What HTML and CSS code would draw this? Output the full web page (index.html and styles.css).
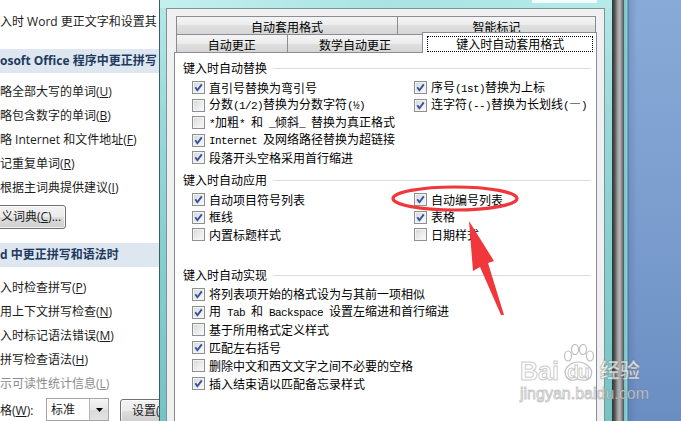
FILE: index.html
```html
<!DOCTYPE html>
<html lang="zh-CN">
<head>
<meta charset="utf-8">
<title>自动更正</title>
<link rel="stylesheet" href="styles.css">
</head>
<body>
<div class="screen">
  <section class="wo">
    <div class="wo-line intro">入时 Word 更正文字和设置其</div>
    <div class="wo-band band-one">osoft Office 程序中更正拼写</div>
    <div class="wo-list list-one">
      <div class="wo-line">略全部大写的单词(<u>U</u>)</div>
      <div class="wo-line">略包含数字的单词(<u>B</u>)</div>
      <div class="wo-line">略 Internet 和文件地址(<u>F</u>)</div>
      <div class="wo-line">记重复单词(<u>R</u>)</div>
      <div class="wo-line">根据主词典提供建议(<u>I</u>)</div>
    </div>
    <div class="wo-btn dict">义词典(<u>C</u>)...</div>
    <div class="wo-band band-two">d 中更正拼写和语法时</div>
    <div class="wo-list list-two">
      <div class="wo-line">入时检查拼写(<u>P</u>)</div>
      <div class="wo-line">用上下文拼写检查(<u>N</u>)</div>
      <div class="wo-line">入时标记语法错误(<u>M</u>)</div>
      <div class="wo-line">拼写检查语法(<u>H</u>)</div>
      <div class="wo-line dim">示可读性统计信息(<u>L</u>)</div>
    </div>
    <div class="style-row">
      <span class="style-label">格(<u>W</u>):</span>
      <span class="combo">
        <span class="combo-text">标准</span>
        <span class="combo-btn"><svg width="7" height="4" viewBox="0 0 7 4"><path d="M0 0H7L3.5 4Z" fill="#000"/></svg></span>
      </span>
      <span class="wo-btn setbtn">设置(</span>
    </div>
  </section>

  <section class="frame">
    <div class="frame-top"><span class="title-strip"></span></div>
    <div class="dialog">
      <div class="tab-row">
        <div class="tab t-a">自动套用格式</div>
        <div class="tab t-b">智能标记</div>
      </div>
      <div class="tab-row lower">
        <div class="tab t-c">自动更正</div>
        <div class="tab t-d">数学自动更正</div>
        <div class="tab active"><span class="focus">键入时自动套用格式</span></div>
      </div>
      <div class="panel">
        <div class="group g1">
          <div class="group-head"><span>键入时自动替换</span></div>
          <div class="cols">
            <div class="col">
              <div class="cb"><span class="box"><svg width="11" height="11" viewBox="0 0 11 11"><path d="M2.3 5.3L4.4 8.2L8.8 2.4" fill="none" stroke="#34509e" stroke-width="1.9"/></svg></span><span class="lbl">直引号替换为弯引号</span></div>
              <div class="cb"><span class="box"></span><span class="lbl">分数<span class="m">(1/2)</span>替换为分数字符<span class="m">(½)</span></span></div>
              <div class="cb"><span class="box"></span><span class="lbl"><span class="m">*</span>加粗<span class="m">* </span>和<span class="m"> _</span>倾斜<span class="m">_ </span>替换为真正格式</span></div>
              <div class="cb"><span class="box"><svg width="11" height="11" viewBox="0 0 11 11"><path d="M2.3 5.3L4.4 8.2L8.8 2.4" fill="none" stroke="#34509e" stroke-width="1.9"/></svg></span><span class="lbl"><span class="m">Internet </span>及网络路径替换为超链接</span></div>
              <div class="cb"><span class="box"><svg width="11" height="11" viewBox="0 0 11 11"><path d="M2.3 5.3L4.4 8.2L8.8 2.4" fill="none" stroke="#34509e" stroke-width="1.9"/></svg></span><span class="lbl">段落开头空格采用首行缩进</span></div>
            </div>
            <div class="col">
              <div class="cb"><span class="box"><svg width="11" height="11" viewBox="0 0 11 11"><path d="M2.3 5.3L4.4 8.2L8.8 2.4" fill="none" stroke="#34509e" stroke-width="1.9"/></svg></span><span class="lbl">序号<span class="m">(1st)</span>替换为上标</span></div>
              <div class="cb"><span class="box"><svg width="11" height="11" viewBox="0 0 11 11"><path d="M2.3 5.3L4.4 8.2L8.8 2.4" fill="none" stroke="#34509e" stroke-width="1.9"/></svg></span><span class="lbl">连字符<span class="m">(--)</span>替换为长划线<span class="m">(</span>—<span class="m">)</span></span></div>
            </div>
          </div>
        </div>

        <div class="group g2">
          <div class="group-head"><span>键入时自动应用</span></div>
          <div class="cols">
            <div class="col">
              <div class="cb"><span class="box"><svg width="11" height="11" viewBox="0 0 11 11"><path d="M2.3 5.3L4.4 8.2L8.8 2.4" fill="none" stroke="#34509e" stroke-width="1.9"/></svg></span><span class="lbl">自动项目符号列表</span></div>
              <div class="cb"><span class="box"><svg width="11" height="11" viewBox="0 0 11 11"><path d="M2.3 5.3L4.4 8.2L8.8 2.4" fill="none" stroke="#34509e" stroke-width="1.9"/></svg></span><span class="lbl">框线</span></div>
              <div class="cb"><span class="box"></span><span class="lbl">内置标题样式</span></div>
            </div>
            <div class="col">
              <div class="cb"><span class="box"><svg width="11" height="11" viewBox="0 0 11 11"><path d="M2.3 5.3L4.4 8.2L8.8 2.4" fill="none" stroke="#34509e" stroke-width="1.9"/></svg></span><span class="lbl">自动编号列表</span></div>
              <div class="cb"><span class="box"><svg width="11" height="11" viewBox="0 0 11 11"><path d="M2.3 5.3L4.4 8.2L8.8 2.4" fill="none" stroke="#34509e" stroke-width="1.9"/></svg></span><span class="lbl">表格</span></div>
              <div class="cb"><span class="box"></span><span class="lbl">日期样式</span></div>
            </div>
          </div>
        </div>

        <div class="group g3">
          <div class="group-head"><span>键入时自动实现</span></div>
          <div class="col">
            <div class="cb"><span class="box"><svg width="11" height="11" viewBox="0 0 11 11"><path d="M2.3 5.3L4.4 8.2L8.8 2.4" fill="none" stroke="#34509e" stroke-width="1.9"/></svg></span><span class="lbl">将列表项开始的格式设为与其前一项相似</span></div>
            <div class="cb"><span class="box"><svg width="11" height="11" viewBox="0 0 11 11"><path d="M2.3 5.3L4.4 8.2L8.8 2.4" fill="none" stroke="#34509e" stroke-width="1.9"/></svg></span><span class="lbl">用<span class="m"> Tab </span>和<span class="m"> Backspace </span>设置左缩进和首行缩进</span></div>
            <div class="cb"><span class="box"></span><span class="lbl">基于所用格式定义样式</span></div>
            <div class="cb"><span class="box"><svg width="11" height="11" viewBox="0 0 11 11"><path d="M2.3 5.3L4.4 8.2L8.8 2.4" fill="none" stroke="#34509e" stroke-width="1.9"/></svg></span><span class="lbl">匹配左右括号</span></div>
            <div class="cb"><span class="box"></span><span class="lbl">删除中文和西文文字之间不必要的空格</span></div>
            <div class="cb"><span class="box"><svg width="11" height="11" viewBox="0 0 11 11"><path d="M2.3 5.3L4.4 8.2L8.8 2.4" fill="none" stroke="#34509e" stroke-width="1.9"/></svg></span><span class="lbl">插入结束语以匹配备忘录样式</span></div>
          </div>
        </div>
      </div>
    </div>
  </section>

  <section class="desk"></section>
</div>

<svg class="marks" width="681" height="421" viewBox="0 0 681 421">
  <ellipse cx="455" cy="198.5" rx="62" ry="11.5" fill="none" stroke="#f0373c" stroke-width="3.2"/>
  <polygon points="469,221 494,261 488,263 504,315 501,315 480,267 473,271" fill="#f0373c"/>
</svg>

<div class="watermark">
  <div class="wm-logo">
    <span class="wm-bai">Bai</span>
    <span class="wm-du">
      <svg class="wm-paw" width="36" height="38" viewBox="0 0 36 38">
        <g fill="none" stroke="rgba(110,110,110,0.45)" stroke-width="1.2">
          <ellipse cx="8" cy="12" rx="3.5" ry="5"/>
          <ellipse cx="15" cy="5.5" rx="3.5" ry="5"/>
          <ellipse cx="23" cy="5.5" rx="3.5" ry="5"/>
          <ellipse cx="30" cy="12" rx="3.5" ry="5"/>
          <path d="M6 32C2 24 12 18 18 18C25 18 34 24 31 32C29 37 22 37 18 35C14 37 8 37 6 32Z"/>
        </g>
      </svg>
      <span class="wm-du-text">du</span>
    </span>
    <span class="wm-cn">经验</span>
  </div>
  <div class="wm-url">jingyan.baidu.com</div>
</div>
</body>
</html>
```

FILE: styles.css
```css
* { box-sizing: border-box; }

html, body {
  margin: 0;
  padding: 0;
  width: 681px;
  height: 421px;
  overflow: hidden;
  background: #fff;
}

body {
  position: relative;
  font-family: "Noto Sans CJK SC", sans-serif;
  font-size: 12px;
  color: #000;
}

.screen {
  display: flex;
  width: 681px;
  height: 421px;
  overflow: hidden;
}

/* ---------- left: Word options ---------- */
.wo {
  flex: none;
  width: 159px;
  height: 421px;
  overflow: hidden;
  white-space: nowrap;
  background: #fff;
  padding-top: 10px;
  font-family: "Open Sans", "Noto Sans CJK SC", sans-serif;
  font-size: 12px;
  color: #1b1b1b;
}

.wo-line {
  height: 24px;
  line-height: 24px;
}

.wo-line.dim { color: #8c8c8c; }

.wo-band {
  height: 24px;
  line-height: 23px;
  background: #dee7f0;
  font-weight: bold;
  color: #1f3a60;
  margin-right: -10px;
}

.band-one { margin-top: 15px; }
.band-two { margin-top: 14px; }
.list-one { margin-top: 7px; }
.list-two { margin-top: 9px; }

.wo-btn {
  display: inline-block;
  height: 24px;
  line-height: 21px;
  border: 1px solid #707070;
  border-radius: 3px;
  background: linear-gradient(#f2f2f2 0, #ebebeb 50%, #dddddd 50%, #cfcfcf 100%);
  box-shadow: inset 0 0 0 1px rgba(255,255,255,0.7);
}

.dict {
  margin-top: 5px;
  margin-left: -14px;
  padding: 0 4px 0 14px;
}

.style-row {
  display: flex;
  align-items: flex-start;
  margin-top: 2px;
}

.style-label {
  width: 46px;
  flex: none;
  line-height: 24px;
  padding-top: 1px;
}

.combo {
  flex: none;
  display: flex;
  width: 63px;
  height: 23px;
  border: 1px solid #a5a5a5;
  background: #fff;
}

.combo-text {
  flex: 1;
  padding-left: 4px;
  line-height: 22px;
}

.combo-btn {
  width: 19px;
  display: flex;
  align-items: center;
  justify-content: center;
  border-left: 1px solid #b5b5b5;
  background: linear-gradient(#f6f6f6, #e6e6e6 50%, #dadada 50%, #e2e2e2);
}

.setbtn {
  flex: none;
  margin-left: 11px;
  margin-top: 1px;
  padding: 0 12px 0 11px;
}

/* ---------- dialog frame ---------- */
.frame {
  flex: none;
  width: 454px;
  height: 421px;
  display: flex;
  flex-direction: column;
  border-left: 1px solid #3c5d60;
  border-right: 1px solid #2e3b3d;
  padding: 0 7px 0 6px;
  background: linear-gradient(#b7e8e8 0, #98d8d8 30%, #86cfcf 60%, #76c3c4 100%);
}

.frame-top {
  height: 8px;
  flex: none;
  display: flex;
  justify-content: flex-end;
  background: linear-gradient(90deg, #c4efef, #a9e3e3 50%, #b5eaea);
  margin: 0 -7px 0 -6px;
  padding-right: 15px;
}

.title-strip {
  width: 65px;
  height: 3px;
  background: #f4fbfb;
}

.dialog {
  flex: 1;
  display: flex;
  flex-direction: column;
  background: #f0f0f0;
  border: 1px solid #7e9193;
  border-bottom: none;
  padding: 7px 7px 0 7px;
  font-family: "Noto Sans CJK SC", sans-serif;
  font-size: 12px;
}

.tab-row {
  display: flex;
  height: 18px;
  margin-left: 2px;
  flex: none;
}

.tab-row.lower { align-items: flex-end; }

.tab {
  height: 18px;
  border: 1px solid #898c95;
  border-bottom: none;
  background: linear-gradient(#f4f4f4 0, #ececec 50%, #dfdfdf 50%, #d6d6d6 100%);
  text-align: center;
  line-height: 17px;
  padding-top: 1px;
  white-space: nowrap;
}

.tab + .tab { margin-left: -1px; }

.t-a { width: 222px; }
.t-b { width: 199px; }
.t-c { width: 112px; }
.t-d { width: 137px; }

.tab.active {
  position: relative;
  z-index: 1;
  width: 175px;
  height: 21px;
  margin-bottom: -1px;
  background: #fff;
  padding: 3px 3px 0 4px;
}

.focus {
  display: block;
  height: 16px;
  line-height: 13px;
  border: 1px dotted #000;
}

.panel {
  flex: 1;
  background: #fff;
  border: 1px solid #898c95;
  border-bottom: none;
  padding: 7px 5px 0 8px;
}

.group-head {
  display: flex;
  align-items: center;
  height: 16px;
  line-height: 16px;
}

.group-head::after {
  content: "";
  flex: 1;
  height: 1px;
  margin-left: 6px;
  background: #d5dfe5;
}

.g2 { margin-top: 5.75px; }
.g3 { margin-top: 23.75px; }

.cols {
  display: flex;
  margin-top: 2.75px;
}

.g3 .col { margin-top: 2.25px; }

.col { padding-left: 9px; }
.cols .col:first-child { width: 231px; }
.cols .col + .col { padding-left: 0; }

.cb {
  display: flex;
  align-items: center;
  height: 17.5px;
  white-space: nowrap;
}

.g3 .cb { height: 17.9px; }

.box {
  flex: none;
  width: 13px;
  height: 13px;
  margin-right: 4px;
  border: 1px solid #8e8f8f;
  background: linear-gradient(135deg, #d3d6da 0, #e9eaec 50%, #fbfbfb 100%);
  box-shadow: inset 0 0 0 1px #f3f3f3;
  display: flex;
  align-items: center;
  justify-content: center;
}

.lbl { line-height: 16px; }

.m {
  font-family: "Liberation Mono", monospace;
  font-size: 11px;
  letter-spacing: -0.6px;
  white-space: pre;
}

/* ---------- right: desktop ---------- */
.desk {
  flex: 1;
  height: 421px;
  background:
    linear-gradient(90deg, #3b3b3b 0, #5a5a5a 2px, #a8a8a8 5px, #b4b4b4 7px, #6a6a6a 10px, #3f5558 11px, #78c2c8 11px, #8fd0d6 14px, #4d6f96 15px, rgba(0,0,0,0) 16px),
    linear-gradient(90deg, rgba(60,90,140,0.25) 15px, rgba(0,0,0,0) 24px),
    linear-gradient(#88aad8 0, #7d9fd0 45%, #6b8ec2 100%);
}

/* ---------- annotations ---------- */
.marks {
  position: absolute;
  left: 0;
  top: 0;
  pointer-events: none;
}

.watermark {
  position: absolute;
  left: 520px;
  top: 343px;
  color: rgba(255,255,255,0.72);
  -webkit-text-stroke: 1px rgba(105,105,105,0.38);
  font-family: "Liberation Sans", sans-serif;
  font-weight: bold;
  pointer-events: none;
}

.wm-logo {
  display: flex;
  align-items: flex-end;
  height: 41px;
}

.wm-bai { font-size: 25px; line-height: 26px; }

.wm-du {
  position: relative;
  width: 38px;
  height: 40px;
  display: flex;
  align-items: flex-end;
  justify-content: center;
}

.wm-paw {
  position: absolute;
  left: 1px;
  top: 0;
}

.wm-du-text {
  position: relative;
  font-size: 19px;
  line-height: 24px;
  letter-spacing: -1px;
}

.wm-cn {
  font-family: "Noto Sans CJK SC", sans-serif;
  font-size: 20px;
  line-height: 28px;
  margin-left: 3px;
}

.wm-url {
  font-size: 16px;
  line-height: 18px;
  margin-top: 1px;
  font-weight: normal;
}
```
